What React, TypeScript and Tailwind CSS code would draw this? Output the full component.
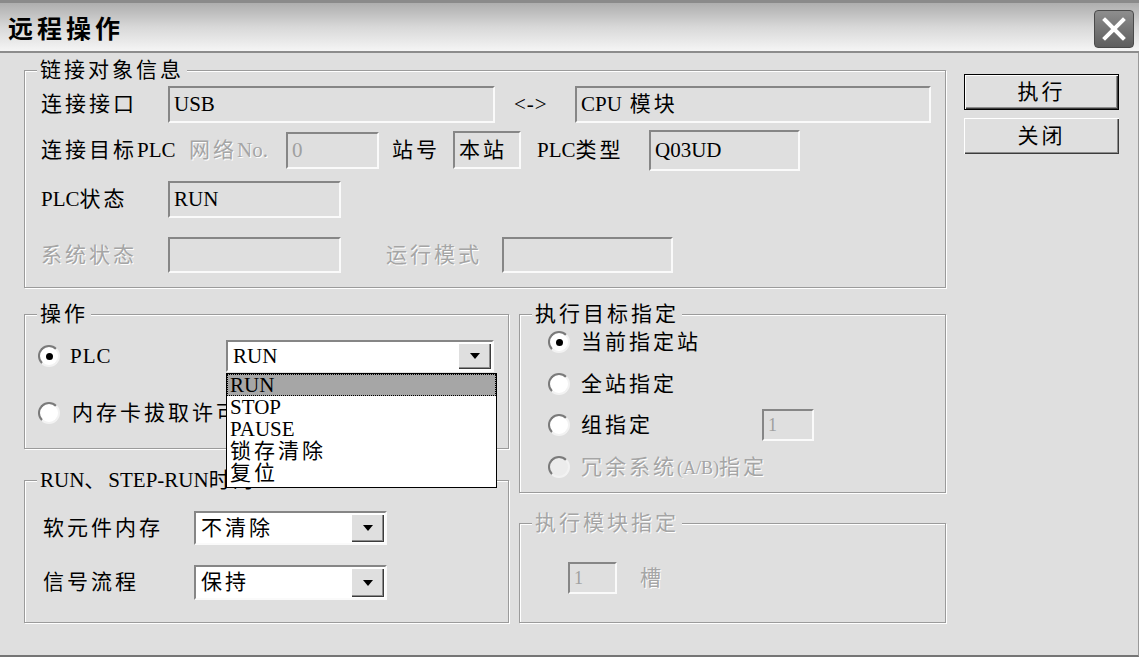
import type { ReactNode } from "react";

const dis = "text-[#a5a5a5] [text-shadow:1px_1px_0_#ffffff]";
const sunken =
  "border-2 border-t-[#868686] border-l-[#868686] border-b-[#fafafa] border-r-[#fafafa]";
const raised =
  "shadow-[inset_1px_1px_0_#ffffff,inset_-1px_-1px_0_#3c3c3c,inset_-2px_-2px_0_#8c8c8c]";

function Z({ children }: { children: ReactNode }) {
  return <span className="tracking-[3px]">{children}</span>;
}

function Group({
  title,
  disabled,
  className,
  children,
}: {
  title: ReactNode;
  disabled?: boolean;
  className: string;
  children: ReactNode;
}) {
  return (
    <div
      className={`relative border border-[#9b9b9b] shadow-[inset_1px_1px_0_#ffffff,1px_1px_0_#ffffff] ${className}`}
    >
      <span
        className={`absolute left-[12px] -top-[13px] px-[3px] bg-[#dfdfdf] leading-[24px] whitespace-nowrap ${
          disabled ? dis : "text-black"
        }`}
      >
        {title}
      </span>
      {children}
    </div>
  );
}

function Field({ className, children, disabled }: { className: string; children?: ReactNode; disabled?: boolean }) {
  return (
    <div
      className={`${sunken} bg-[#dfdfdf] flex items-center pl-[4px] whitespace-nowrap overflow-hidden ${
        disabled ? "text-[#a0a0a0]" : "text-black"
      } ${className}`}
    >
      {children}
    </div>
  );
}

function Arrow() {
  return (
    <div className={`w-[33px] bg-[#dfdfdf] flex items-center justify-center ${raised}`}>
      <div className="w-0 h-0 border-l-[5px] border-r-[5px] border-t-[6px] border-l-transparent border-r-transparent border-t-black" />
    </div>
  );
}

function Select({ className, value, children }: { className: string; value: ReactNode; children?: ReactNode }) {
  return (
    <div className={`relative ${sunken} bg-white flex p-[1px] ${className}`}>
      <div className="flex-1 flex items-center pl-[4px] whitespace-nowrap">{value}</div>
      <Arrow />
      {children}
    </div>
  );
}

function Radio({ checked, disabled }: { checked?: boolean; disabled?: boolean }) {
  return (
    <span
      className={`w-[22px] h-[22px] shrink-0 rounded-full border-2 border-t-[#7a7a7a] border-l-[#7a7a7a] border-b-[#f2f2f2] border-r-[#f2f2f2] flex items-center justify-center ${
        disabled ? "bg-[#ececec]" : "bg-white"
      }`}
    >
      {checked && <span className="w-[7px] h-[7px] rounded-full bg-black" />}
    </span>
  );
}

export default function App() {
  return (
    <div className="w-[1139px] h-[657px] bg-[#dfdfdf] flex flex-col overflow-hidden text-[21px] text-black font-['Liberation_Serif','Noto_Sans_CJK_SC',serif] leading-none">
      {/* title bar */}
      <div className="h-[53px] shrink-0 flex items-center justify-between pl-[8px] pr-[5px] border-t-[3px] border-t-[#8a8a8a] border-b-2 border-b-[#8c8c8c] bg-linear-to-b from-[#aeaeae] via-[#d8d8d8] to-[#f5f5f5]">
        <span className="font-['Noto_Sans_CJK_SC',sans-serif] font-bold text-[25px] tracking-[4px] text-black">远程操作</span>
        <button className="self-start mt-[7px] w-[40px] h-[38px] rounded-[4px] border border-[#4a4a4a] bg-linear-to-b from-[#8e8e8e] to-[#5e5e5e] flex items-center justify-center">
          <svg width="26" height="24" viewBox="0 0 26 24">
            <path d="M4 3 L22 21 M22 3 L4 21" stroke="#ffffff" strokeWidth="4" strokeLinecap="square" />
          </svg>
        </button>
      </div>

      {/* body */}
      <div className="flex-1 flex border-b-2 border-b-[#757575] border-r border-r-[#9a9a9a]">
        <div className="ml-[24px] w-[922px] flex flex-col">
          {/* 链接对象信息 */}
          <Group title={<Z>链接对象信息</Z>} className="mt-[17px] h-[218px] pl-[16px] pt-[15px]">
            <div className="flex items-center h-[37px]">
              <span className="w-[127px]"><Z>连接接口</Z></span>
              <Field className="w-[327px] h-[37px]">USB</Field>
              <span className="ml-[19px] w-[61px] tracking-[1px]">{"<->"}</span>
              <Field className="w-[356px] h-[37px]">CPU <span className="ml-[8px]"><Z>模块</Z></span></Field>
            </div>
            <div className="flex items-center h-[40px] mt-[7px]">
              <span className="w-[148px] whitespace-nowrap"><Z>连接目标</Z>PLC</span>
              <span className={`w-[97px] whitespace-nowrap ${dis}`}><Z>网络</Z>No.</span>
              <Field disabled className="w-[93px] h-[37px]">0</Field>
              <span className="ml-[13px] w-[61px]"><Z>站号</Z></span>
              <Field className="w-[68px] h-[38px]"><Z>本站</Z></Field>
              <span className="ml-[16px] w-[112px] whitespace-nowrap">PLC<Z>类型</Z></span>
              <Field className="w-[151px] h-[41px]">Q03UD</Field>
            </div>
            <div className="flex items-center h-[37px] mt-[11px]">
              <span className="w-[127px] whitespace-nowrap">PLC<Z>状态</Z></span>
              <Field className="w-[173px] h-[37px]">RUN</Field>
            </div>
            <div className="flex items-center h-[36px] mt-[19px]">
              <span className={`w-[127px] ${dis}`}><Z>系统状态</Z></span>
              <Field className="w-[173px] h-[36px]" />
              <span className={`ml-[45px] w-[116px] ${dis}`}><Z>运行模式</Z></span>
              <Field className="w-[171px] h-[36px]" />
            </div>
          </Group>

          <div className="flex gap-[10px]">
            <div className="w-[485px] flex flex-col">
              {/* 操作 */}
              <Group title={<Z>操作</Z>} className="mt-[26px] h-[135px] pl-[13px] pt-[25px]">
                <div className="flex items-center h-[32px]">
                  <div className="w-[188px] flex items-center">
                    <Radio checked />
                    <span className="ml-[10px] tracking-[1px]">PLC</span>
                  </div>
                  <Select className="w-[268px] h-[32px] z-10" value="RUN">
                    <div className="absolute left-[-2px] top-[calc(100%+3px)] w-[271px] border border-black bg-white flex flex-col">
                      <div className="h-[22px] pl-[2px] flex items-center bg-[#a6a6a6] border border-dotted border-black">RUN</div>
                      <div className="h-[22px] pl-[3px] flex items-center">STOP</div>
                      <div className="h-[22px] pl-[3px] flex items-center">PAUSE</div>
                      <div className="h-[22px] pl-[3px] flex items-center"><Z>锁存清除</Z></div>
                      <div className="h-[25px] pl-[3px] pb-[3px] flex items-center"><Z>复位</Z></div>
                    </div>
                  </Select>
                </div>
                <div className="flex items-center h-[32px] mt-[25px]">
                  <Radio />
                  <span className="ml-[12px] whitespace-nowrap"><Z>内存卡拔取许可</Z></span>
                </div>
              </Group>

              {/* RUN、STEP-RUN时 */}
              <Group
                title={<>RUN<Z>、</Z>STEP-RUN<Z>时的</Z></>}
                className="mt-[31px] h-[143px] pl-[18px] pt-[30px]"
              >
                <div className="flex items-center h-[34px]">
                  <span className="w-[151px]"><Z>软元件内存</Z></span>
                  <Select className="w-[193px] h-[34px]" value={<Z>不清除</Z>} />
                </div>
                <div className="flex items-center h-[35px] mt-[20px]">
                  <span className="w-[151px]"><Z>信号流程</Z></span>
                  <Select className="w-[193px] h-[35px]" value={<Z>保持</Z>} />
                </div>
              </Group>
            </div>

            <div className="w-[427px] flex flex-col">
              {/* 执行目标指定 */}
              <Group title={<Z>执行目标指定</Z>} className="mt-[26px] h-[179px] pl-[28px] pt-[12px]">
                <div className="flex items-center h-[30px]">
                  <Radio checked />
                  <span className="ml-[11px]"><Z>当前指定站</Z></span>
                </div>
                <div className="flex items-center h-[30px] mt-[12px]">
                  <Radio />
                  <span className="ml-[11px]"><Z>全站指定</Z></span>
                </div>
                <div className="flex items-center h-[30px] mt-[11px]">
                  <div className="w-[214px] flex items-center">
                    <Radio />
                    <span className="ml-[11px]"><Z>组指定</Z></span>
                  </div>
                  <Field disabled className="w-[52px] h-[32px] text-[18px]">1</Field>
                </div>
                <div className="flex items-center h-[30px] mt-[12px]">
                  <Radio disabled />
                  <span className={`ml-[11px] whitespace-nowrap ${dis}`}>
                    <Z>冗余系统</Z><span className="text-[18px]">(A/B)</span><Z>指定</Z>
                  </span>
                </div>
              </Group>

              {/* 执行模块指定 */}
              <Group title={<Z>执行模块指定</Z>} disabled className="mt-[30px] h-[100px] pl-[48px] pt-[38px]">
                <div className="flex items-center h-[32px]">
                  <Field disabled className="w-[49px] h-[32px] text-[18px]">1</Field>
                  <span className={`ml-[23px] ${dis}`}><Z>槽</Z></span>
                </div>
              </Group>
            </div>
          </div>
        </div>

        {/* buttons */}
        <div className="ml-[18px] w-[155px] flex flex-col">
          <button className={`mt-[21px] h-[36px] border border-black bg-[#dfdfdf] ${raised} flex items-center justify-center`}>
            <Z>执行</Z>
          </button>
          <button className={`mt-[8px] h-[36px] bg-[#dfdfdf] ${raised} flex items-center justify-center`}>
            <Z>关闭</Z>
          </button>
        </div>
      </div>
    </div>
  );
}
